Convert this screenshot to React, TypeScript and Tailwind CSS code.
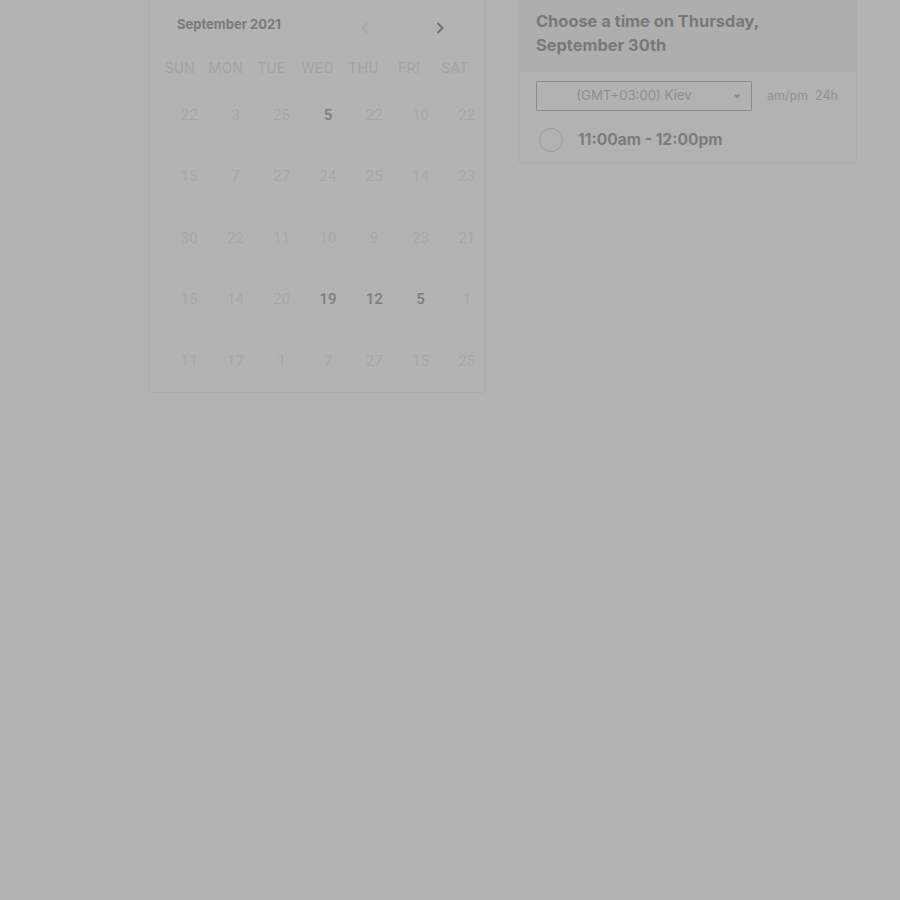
import React from "react";

const days = ["SUN", "MON", "TUE", "WED", "THU", "FRI", "SAT"];
const rows: [string, boolean][][] = [
  [["22", false], ["3", false], ["25", false], ["5", true], ["22", false], ["10", false], ["22", false]],
  [["15", false], ["7", false], ["27", false], ["24", false], ["25", false], ["14", false], ["23", false]],
  [["30", false], ["22", false], ["11", false], ["10", false], ["9", false], ["23", false], ["21", false]],
  [["15", false], ["14", false], ["20", false], ["19", true], ["12", true], ["5", true], ["1", false]],
  [["11", false], ["17", false], ["1", false], ["7", false], ["27", false], ["15", false], ["25", false]],
];

export default function App() {
  return (
    <div className="w-[900px] h-[900px] overflow-hidden bg-[#b3b3b3]">
      <div className="flex items-start gap-[32px] pl-[148px] -mt-[10px]">
        {/* Calendar card */}
        <div className="w-[338px] h-[403px] rounded-[4px] border border-[#acacac] bg-[#b3b3b3]" style={{ fontFamily: "Roboto, 'Liberation Sans', sans-serif" }}>
          <div className="relative h-[64px]">
            <span
              className="absolute left-[28px] top-[24px] text-[13px] font-bold text-[#7a7a7a]"
              style={{ fontFamily: "Inter, 'Liberation Sans', sans-serif" }}
            >
              September 2021
            </span>
            <svg className="absolute left-[210px] top-[29px]" width="12" height="16" viewBox="0 0 12 16">
              <path d="M8.5 3 L3.5 8 L8.5 13" fill="none" stroke="#a6a6a6" strokeWidth="1.6" />
            </svg>
            <svg className="absolute left-[285px] top-[29px]" width="12" height="16" viewBox="0 0 12 16">
              <path d="M3.5 3 L8.5 8 L3.5 13" fill="none" stroke="#6f6f6f" strokeWidth="2" />
            </svg>
          </div>
          <div className="ml-[8px] grid w-[321px] grid-cols-7 h-[26px] items-center">
            {days.map((d) => (
              <div key={d} className="text-center text-[15px] text-[#a3a3a3] tracking-[0.3px]">
                {d}
              </div>
            ))}
          </div>
          <div className="ml-[17px] mt-[3px] w-[324px]">
            {rows.map((r, i) => (
              <div key={i} className="grid grid-cols-7 h-[61.5px] items-center">
                {r.map(([n, b], j) => (
                  <div
                    key={j}
                    className={
                      b
                        ? "text-center text-[15px] font-medium text-[#7e7e7e]"
                        : "text-center text-[15px] text-[#a7a7a7]"
                    }
                  >
                    {n}
                  </div>
                ))}
              </div>
            ))}
          </div>
        </div>

        {/* Time card */}
        <div
          className="w-[339px] rounded-[4px] border border-[#adadad] bg-[#b2b2b2]"
          style={{ fontFamily: "Inter, 'Liberation Sans', sans-serif" }}
        >
          <div className="bg-[#aeaeae] pl-[17px] pt-[18px] pb-[15px]">
            <div className="text-[16.4px] leading-[24px] font-bold text-[#787878]">
              Choose a time on Thursday,
              <br />
              September 30th
            </div>
          </div>
          <div className="px-[17px] pt-[9px] pb-[12px]">
            <div className="flex items-center">
              <div className="relative flex h-[30px] w-[216px] items-center justify-center rounded-[2px] border border-[#8c8c8c] text-[13.2px] text-[#8e8e8e]">
                <span className="mr-[20px]">(GMT+03:00) Kiev</span>
                <svg className="absolute right-[10px] top-[12px]" width="8" height="5" viewBox="0 0 8 5">
                  <path d="M0.5 0.5 L7.5 0.5 L4 4.5 Z" fill="#8a8a8a" />
                </svg>
              </div>
              <span className="ml-[15px] text-[12.5px] text-[#909090] whitespace-pre">am/pm  24h</span>
            </div>
            <div className="mt-[17px] flex h-[23px] items-center">
              <div className="ml-[3px] h-[24px] w-[24px] shrink-0 rounded-full border-[1.5px] border-[#9a9a9a]" />
              <span className="ml-[15px] text-[15.6px] font-bold text-[#7c7c7c]">11:00am - 12:00pm</span>
            </div>
          </div>
        </div>
      </div>
    </div>
  );
}
